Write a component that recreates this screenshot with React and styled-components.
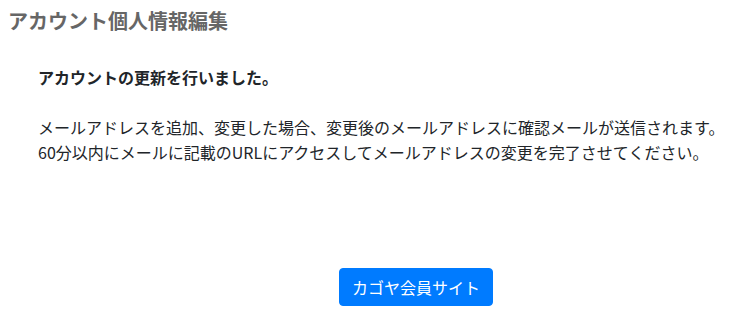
import React from "react";
import styled, { createGlobalStyle } from "styled-components";

const Global = createGlobalStyle`
  html, body { margin: 0; padding: 0; background: #fff; }
  body {
    font-family: "Noto Sans CJK JP", "Noto Sans", sans-serif;
    color: #212529;
  }
`;

const Page = styled.div`
  width: 755px;
  height: 317px;
  overflow: hidden;
  display: flex;
  flex-direction: column;
`;

const Title = styled.h1`
  margin: 9px 0 0 8px;
  font-size: 20px;
  line-height: 24px;
  font-weight: 700;
  color: #666666;
`;

const Content = styled.div`
  padding: 32px 0 0 38px;
  display: flex;
  flex-direction: column;
`;

const Lead = styled.p`
  margin: 0;
  font-size: 16px;
  line-height: 24px;
  font-weight: 700;
  color: #212529;
`;

const Message = styled.p`
  margin: 26px 0 0;
  font-size: 16px;
  line-height: 25px;
  color: #212529;
  white-space: nowrap;
`;

const ButtonRow = styled.div`
  display: flex;
  padding-left: 301px;
  margin-top: 103px;
`;

const PrimaryButton = styled.button`
  font-family: inherit;
  font-size: 16px;
  line-height: 24px;
  height: 38px;
  padding: 6px 12px;
  border: 1px solid #007bff;
  border-radius: 4px;
  background: #007bff;
  color: #fff;
  cursor: pointer;
`;

export default function App() {
  return (
    <>
      <Global />
      <Page>
        <Title>アカウント個人情報編集</Title>
        <Content>
          <Lead>アカウントの更新を行いました。</Lead>
          <Message>
            メールアドレスを追加、変更した場合、変更後のメールアドレスに確認メールが送信されます。
            <br />
            60分以内にメールに記載のURLにアクセスしてメールアドレスの変更を完了させてください。
          </Message>
          <ButtonRow>
            <PrimaryButton>カゴヤ会員サイト</PrimaryButton>
          </ButtonRow>
        </Content>
      </Page>
    </>
  );
}
